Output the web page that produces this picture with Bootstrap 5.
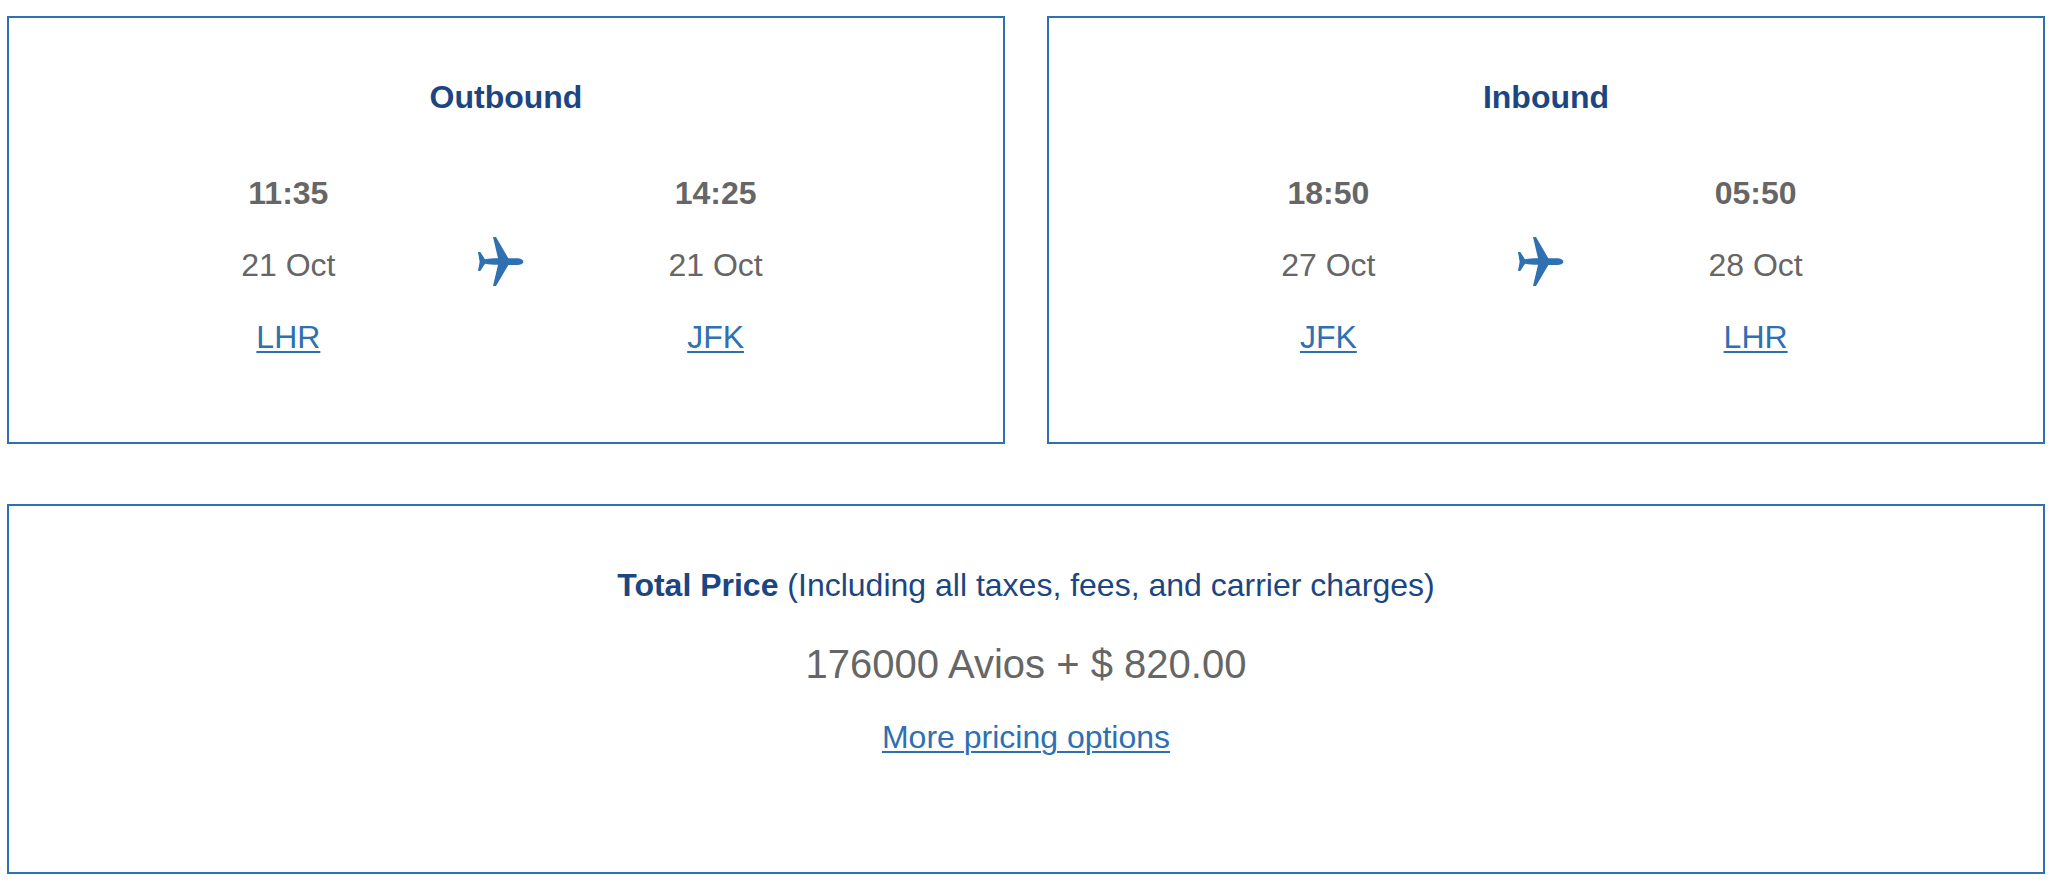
<!DOCTYPE html>
<html lang="en">
<head>
<meta charset="utf-8">
<meta name="viewport" content="width=device-width, initial-scale=1">
<title>Flight summary</title>
<link href="https://cdn.jsdelivr.net/npm/bootstrap@5.3.0/dist/css/bootstrap.min.css" rel="stylesheet">
<style>
  body {
    font-family: "Liberation Sans", Arial, sans-serif;
    font-size: 32px;
    line-height: 48px;
    color: #666;
    background: #fff;
  }
  .summary { padding: 16px 11px 8px 7px; }
  .journeys { gap: 42px; margin-bottom: 60px; }
  .panel { border: 2px solid #2e70b1; padding-top: 55px; }
  .flight { flex: 1 1 0; padding-bottom: 81px; }
  .fare { padding-bottom: 111px; }
  .panel-title { font-size: 32px; line-height: 48px; color: #1b4682; }
  .legs { width: 65%; }
  .price { font-size: 40px; line-height: 60px; margin: 25px 0 19px; }
  .panel a { color: #2e70b1; text-decoration-thickness: 2px; text-underline-offset: 3px; }
  .plane { fill: #2e70b1; }
</style>
</head>
<body>
<main class="summary text-center">
  <div class="journeys d-flex">
    <section class="panel flight">
      <h2 class="panel-title fw-bold mb-5">Outbound</h2>
      <div class="pe-2">
        <div class="legs row g-0 mx-auto align-items-center">
          <div class="col">
            <p class="fw-bold mb-4">11:35</p>
            <p class="mb-4">21 Oct</p>
            <p class="mb-0"><a href="#lhr">LHR</a></p>
          </div>
          <div class="col d-flex justify-content-center mb-2">
            <svg class="plane" width="48" height="49" viewBox="54 48 144 147" aria-hidden="true"><path d="M99 48h9l37 64h25c11 0 20 4 20 10s-9 10-20 10h-25l-37 63h-9l15-64c-15 0-28-1-39-3l-14 22h-7l5-28-5-29h7l14 22c11-2 24-3 39-3z"/></svg>
          </div>
          <div class="col">
            <p class="fw-bold mb-4">14:25</p>
            <p class="mb-4">21 Oct</p>
            <p class="mb-0"><a href="#jfk">JFK</a></p>
          </div>
        </div>
      </div>
    </section>
    <section class="panel flight">
      <h2 class="panel-title fw-bold mb-5">Inbound</h2>
      <div class="pe-2">
        <div class="legs row g-0 mx-auto align-items-center">
          <div class="col">
            <p class="fw-bold mb-4">18:50</p>
            <p class="mb-4">27 Oct</p>
            <p class="mb-0"><a href="#jfk">JFK</a></p>
          </div>
          <div class="col d-flex justify-content-center mb-2">
            <svg class="plane" width="48" height="49" viewBox="54 48 144 147" aria-hidden="true"><path d="M99 48h9l37 64h25c11 0 20 4 20 10s-9 10-20 10h-25l-37 63h-9l15-64c-15 0-28-1-39-3l-14 22h-7l5-28-5-29h7l14 22c11-2 24-3 39-3z"/></svg>
          </div>
          <div class="col">
            <p class="fw-bold mb-4">05:50</p>
            <p class="mb-4">28 Oct</p>
            <p class="mb-0"><a href="#lhr">LHR</a></p>
          </div>
        </div>
      </div>
    </section>
  </div>
  <section class="panel fare">
    <h2 class="panel-title fw-normal mb-0"><strong>Total Price</strong> (Including all taxes, fees, and carrier charges)</h2>
    <p class="price">176000 Avios + $ 820.00</p>
    <p class="mb-0"><a href="#pricing">More pricing options</a></p>
  </section>
</main>
<script src="https://cdn.jsdelivr.net/npm/bootstrap@5.3.0/dist/js/bootstrap.bundle.min.js"></script>
</body>
</html>
